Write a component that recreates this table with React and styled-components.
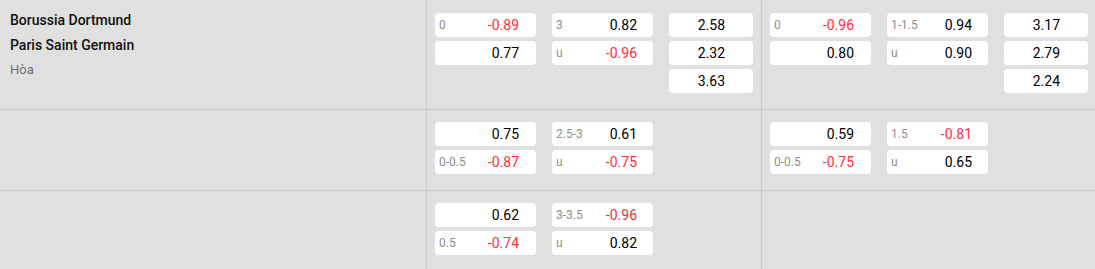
import React from "react";
import styled, { createGlobalStyle } from "styled-components";

const Global = createGlobalStyle`
  html, body { margin: 0; padding: 0; background: #e0e0e0; }
  body { font-family: Roboto, "Liberation Sans", Arial, sans-serif; }
`;

const Table = styled.div`
  width: 1095px;
  background: #e0e0e0;
`;

const Row = styled.div`
  display: grid;
  grid-template-columns: 426px 335px 1fr;
  border-bottom: 1px solid #cbcbcb;
`;

const TeamCell = styled.div`
  padding: 8px 10px 0;
  display: flex;
  flex-direction: column;
`;

const Team = styled.div`
  font-size: 14px;
  line-height: 25px;
  font-weight: 500;
  color: #111;
`;

const Draw = styled.div`
  font-size: 13px;
  line-height: 23px;
  color: #6f6f6f;
`;

const Group = styled.div`
  border-left: 1px solid #cbcbcb;
  padding: ${(p) => (p.$first ? "13px" : "12px")} 8px 16px 8px;
  display: grid;
  grid-template-columns: 101px 101px 84px;
  column-gap: 16px;
  align-items: start;
`;

const Col = styled.div`
  display: flex;
  flex-direction: column;
  gap: 4px;
`;

const Box = styled.div`
  height: 24px;
  background: #fff;
  border-radius: 4px;
  display: flex;
  align-items: center;
  justify-content: space-between;
  padding: 0 ${(p) => p.$pr}px 0 4px;
  box-sizing: border-box;
`;

const Label = styled.span`
  font-size: 12px;
  color: #8e8e8e;
`;

const Value = styled.span`
  margin-left: auto;
  font-size: 14px;
  font-weight: 400;
  color: ${(p) => (p.$neg ? "#ff2d3a" : "#000")};
`;

const Odd = ({ l, v, pr }) => (
  <Box $pr={pr}>
    {l ? <Label>{l}</Label> : null}
    <Value $neg={v.startsWith("-")}>{v}</Value>
  </Box>
);

const rows = [
  {
    teams: true,
    groups: [
      {
        c1: [["0", "-0.89"], ["", "0.77"]],
        c2: [["3", "0.82"], ["u", "-0.96"]],
        c3: ["2.58", "2.32", "3.63"],
      },
      {
        c1: [["0", "-0.96"], ["", "0.80"]],
        c2: [["1-1.5", "0.94"], ["u", "0.90"]],
        c3: ["3.17", "2.79", "2.24"],
      },
    ],
  },
  {
    groups: [
      {
        c1: [["", "0.75"], ["0-0.5", "-0.87"]],
        c2: [["2.5-3", "0.61"], ["u", "-0.75"]],
        c3: [],
      },
      {
        c1: [["", "0.59"], ["0-0.5", "-0.75"]],
        c2: [["1.5", "-0.81"], ["u", "0.65"]],
        c3: [],
      },
    ],
  },
  {
    groups: [
      {
        c1: [["", "0.62"], ["0.5", "-0.74"]],
        c2: [["3-3.5", "-0.96"], ["u", "0.82"]],
        c3: [],
      },
      { c1: [], c2: [], c3: [] },
    ],
  },
];

export default function App() {
  return (
    <>
      <Global />
      <Table>
        {rows.map((r, i) => (
          <Row key={i}>
            <TeamCell>
              {r.teams && (
                <>
                  <Team>Borussia Dortmund</Team>
                  <Team>Paris Saint Germain</Team>
                  <Draw>Hòa</Draw>
                </>
              )}
            </TeamCell>
            {r.groups.map((g, j) => (
              <Group key={j} $first={i === 0}>
                <Col>
                  {g.c1.map(([l, v], k) => (
                    <Odd key={k} l={l} v={v} pr={17} />
                  ))}
                </Col>
                <Col>
                  {g.c2.map(([l, v], k) => (
                    <Odd key={k} l={l} v={v} pr={16} />
                  ))}
                </Col>
                <Col>
                  {g.c3.map((v, k) => (
                    <Odd key={k} l="" v={v} pr={28} />
                  ))}
                </Col>
              </Group>
            ))}
          </Row>
        ))}
      </Table>
    </>
  );
}
